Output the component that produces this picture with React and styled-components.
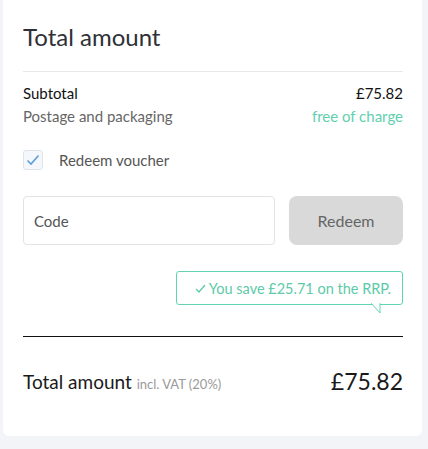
import React from 'react';
import styled, { createGlobalStyle } from 'styled-components';

const GlobalStyle = createGlobalStyle`
	body {
		margin: 0;
		background: #f3f4f8;
		font-family: 'Lato', 'Noto Sans', sans-serif;
	}
`;

const Page = styled.div`
	padding: 0 6px 13px 3px;
`;

const Card = styled.div`
	background: #fff;
	border-radius: 0 0 6px 6px;
	padding: 22px 19px 0 20px;
	height: 436px;
	box-sizing: border-box;
`;

const Title = styled.h2`
	margin: 0;
	font-size: 24px;
	font-weight: 400;
	line-height: 30px;
	color: #2f3038;
`;

const Divider = styled.hr`
	margin: ${(p) => p.$gap} 0 0;
	border: 0;
	border-top: 1px solid ${(p) => (p.$strong ? '#111' : '#e8e8ec')};
`;

const Rows = styled.div`
	margin-top: 10px;
`;

const Row = styled.div`
	display: flex;
	justify-content: space-between;
	font-size: 15px;
	line-height: 23px;
	color: ${(p) => (p.$muted ? '#666' : '#111')};
`;

const Free = styled.span`
	color: #62cfae;
`;

const Check = styled.label`
	display: flex;
	align-items: center;
	gap: 16px;
	margin-top: 22px;
	font-size: 15px;
	color: #555;
`;

const Box = styled.span`
	width: 20px;
	height: 20px;
	box-sizing: border-box;
	border: 1px solid #dfe3ea;
	border-radius: 3px;
	background: #f4f7fb;
	display: flex;
	align-items: center;
	justify-content: center;
`;

const Form = styled.div`
	display: flex;
	gap: 14px;
	margin-top: 26px;
`;

const Input = styled.input`
	flex: 1;
	height: 49px;
	box-sizing: border-box;
	border: 1px solid #e3e3e6;
	border-radius: 4px;
	padding: 0 10px;
	font: inherit;
	font-size: 15px;
	color: #333;
	outline: none;
	&::placeholder {
		color: #555;
	}
`;

const Button = styled.button`
	width: 114px;
	height: 49px;
	border: 0;
	border-radius: 8px;
	background: #d9d9d9;
	font: inherit;
	font-size: 16px;
	color: #666;
	cursor: pointer;
`;

const Hint = styled.div`
	display: flex;
	justify-content: flex-end;
	margin-top: 26px;
`;

const Bubble = styled.div`
	position: relative;
	border: 1px solid #62d4b3;
	border-radius: 3px;
	padding: 0 11px 0 18px;
	height: 34px;
	box-sizing: border-box;
	display: flex;
	align-items: center;
	font-size: 14.5px;
	color: #5ccaa8;
	background: #fff;
`;

const Tail = styled.svg`
	position: absolute;
	right: 20px;
	bottom: -10px;
`;

const Total = styled.div`
	display: flex;
	justify-content: space-between;
	align-items: center;
	margin-top: 30px;
`;

const Label = styled.div`
	font-size: 19px;
	color: #1a1a1a;
`;

const Vat = styled.span`
	font-size: 13px;
	color: #9a9a9a;
`;

const Amount = styled.div`
	font-size: 23px;
	color: #1a1a1a;
`;

export default function App() {
	return (
		<Page>
			<GlobalStyle />
			<Card>
				<Title>Total amount</Title>
				<Divider $gap='19px' />
				<Rows>
					<Row>
						<span>Subtotal</span>
						<span>£75.82</span>
					</Row>
					<Row $muted>
						<span>Postage and packaging</span>
						<Free>free of charge</Free>
					</Row>
				</Rows>
				<Check>
					<Box>
						<svg width='14' height='12' viewBox='0 0 14 12'>
							<path d='M1.5 6.5 L5 10 L12.5 1.5' fill='none' stroke='#5a9fd8' strokeWidth='1.6' />
						</svg>
					</Box>
					Redeem voucher
				</Check>
				<Form>
					<Input placeholder='Code' />
					<Button>Redeem</Button>
				</Form>
				<Hint>
					<Bubble>
						<svg width='11' height='9' viewBox='0 0 11 9' style={{ marginRight: 3 }}>
							<path d='M1 5 L4 8 L10 1' fill='none' stroke='#5ccaa8' strokeWidth='1.2' />
						</svg>
						You save £25.71 on the RRP.
						<Tail width='11' height='11' viewBox='0 0 11 11'>
							<path d='M0 0 L9 10 L9 0' fill='#fff' stroke='#62d4b3' strokeWidth='1' />
							<rect x='0.5' y='-1' width='8' height='1.6' fill='#fff' />
						</Tail>
					</Bubble>
				</Hint>
				<Divider $gap='31px' $strong />
				<Total>
					<Label>
						Total amount <Vat>incl. VAT (20%)</Vat>
					</Label>
					<Amount>£75.82</Amount>
				</Total>
			</Card>
		</Page>
	);
}
